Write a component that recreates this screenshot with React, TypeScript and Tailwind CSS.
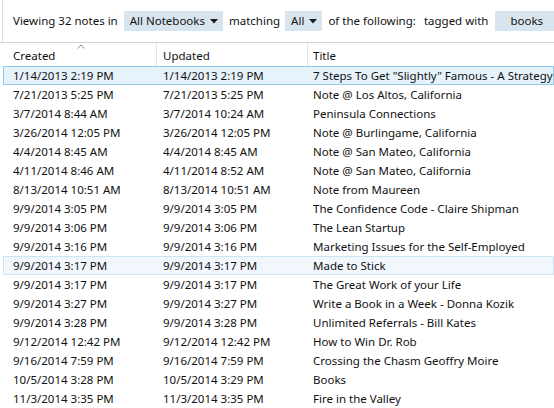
import React from "react";

const notes: [string, string, string][] = [
  ["1/14/2013 2:19 PM", "1/14/2013 2:19 PM", "7 Steps To Get \"Slightly\" Famous - A Strategy for Success"],
  ["7/21/2013 5:25 PM", "7/21/2013 5:25 PM", "Note @ Los Altos, California"],
  ["3/7/2014 8:44 AM", "3/7/2014 10:24 AM", "Peninsula Connections"],
  ["3/26/2014 12:05 PM", "3/26/2014 12:05 PM", "Note @ Burlingame, California"],
  ["4/4/2014 8:45 AM", "4/4/2014 8:45 AM", "Note @ San Mateo, California"],
  ["4/11/2014 8:46 AM", "4/11/2014 8:52 AM", "Note @ San Mateo, California"],
  ["8/13/2014 10:51 AM", "8/13/2014 10:51 AM", "Note from Maureen"],
  ["9/9/2014 3:05 PM", "9/9/2014 3:05 PM", "The Confidence Code - Claire Shipman"],
  ["9/9/2014 3:06 PM", "9/9/2014 3:06 PM", "The Lean Startup"],
  ["9/9/2014 3:16 PM", "9/9/2014 3:16 PM", "Marketing Issues for the Self-Employed"],
  ["9/9/2014 3:17 PM", "9/9/2014 3:17 PM", "Made to Stick"],
  ["9/9/2014 3:17 PM", "9/9/2014 3:17 PM", "The Great Work of your Life"],
  ["9/9/2014 3:27 PM", "9/9/2014 3:27 PM", "Write a Book in a Week - Donna Kozik"],
  ["9/9/2014 3:28 PM", "9/9/2014 3:28 PM", "Unlimited Referrals - Bill Kates"],
  ["9/12/2014 12:42 PM", "9/12/2014 12:42 PM", "How to Win Dr. Rob"],
  ["9/16/2014 7:59 PM", "9/16/2014 7:59 PM", "Crossing the Chasm Geoffry Moire"],
  ["10/5/2014 3:28 PM", "10/5/2014 3:29 PM", "Books"],
  ["11/3/2014 3:35 PM", "11/3/2014 3:35 PM", "Fire in the Valley"],
];

const Caret = () => (
  <svg width="8" height="5" viewBox="0 0 8 5" className="ml-[5px] mt-[1px]">
    <path d="M0 0h8L4 4.5z" fill="#1a1a1a" />
  </svg>
);

const App: React.FC = () => {
  return (
    <div
      className="w-[554px] h-[408px] overflow-hidden bg-white text-[11.5px] text-[#111]"
      style={{ fontFamily: '"Noto Sans", "Open Sans", sans-serif' }}
    >
      {/* Filter bar */}
      <div className="h-[42px] ml-[2px] border-l border-[#e0e0e0] flex items-center pl-[10px] whitespace-nowrap">
        <span>Viewing 32 notes in</span>
        <div className="ml-[6px] h-[20px] bg-[#d9e5ee] flex items-center pl-[6px] pr-[5px]">
          All Notebooks
          <Caret />
        </div>
        <span className="ml-[6px]">matching</span>
        <div className="ml-[5px] h-[20px] bg-[#d9e5ee] flex items-center pl-[6px] pr-[5px]">
          All
          <Caret />
        </div>
        <span className="ml-[6px]">of the following:</span>
        <span className="ml-[8px]">tagged with</span>
        <div className="ml-[7px] h-[20px] w-[60px] shrink-0 bg-[#d9e5ee] flex items-center pl-[15px]">
          books
        </div>
      </div>

      {/* Table */}
      <div className="border-t border-[#d5d5d5]">
        <div className="h-[23px] flex items-center relative">
          <svg width="8" height="5" viewBox="0 0 8 5" className="absolute left-[77px] top-[1px]">
            <path d="M0.5 4.5L4 1l3.5 3.5" stroke="#888" fill="none" />
          </svg>
          <div className="w-[156px] pl-[13px] pt-[2px]">Created</div>
          <div className="w-[151px] h-full border-l border-[#e5e5e5] pl-[6px] pt-[2px] flex items-center">Updated</div>
          <div className="flex-1 h-full border-l border-[#e5e5e5] pl-[5px] pt-[2px] flex items-center">Title</div>
        </div>
        {notes.map(([created, updated, title], i) => {
          const rowCls =
            i === 0
              ? "bg-[#e6f3fb] border-[#8fcbeb]"
              : i === 10
              ? "bg-[#f1f7fc] border-[#cce5f5]"
              : "border-transparent";
          return (
            <div key={i} className={`h-[19px] ml-[3px] flex items-center whitespace-nowrap border ${rowCls}`}>
              <div className="w-[153px] pl-[9px] shrink-0">{created}</div>
              <div className="w-[150px] pl-[6px] shrink-0">{updated}</div>
              <div className="pl-[6px] shrink-0">{title}</div>
            </div>
          );
        })}
      </div>
    </div>
  );
};

export default App;
